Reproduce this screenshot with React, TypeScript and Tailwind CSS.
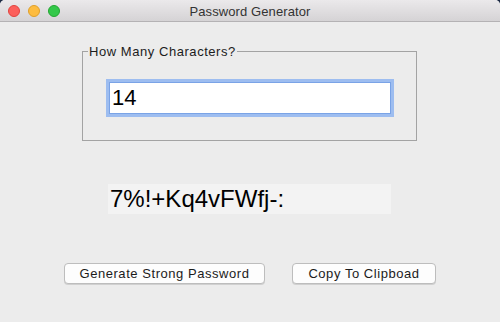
export default function App() {
  return (
    <div className="w-[500px] h-[322px] bg-[#1d2a44] font-['Liberation_Sans',Arial,sans-serif]">
      <div className="w-full h-full rounded-t-[5px] overflow-hidden bg-[#ececec] flex flex-col">
        {/* title bar */}
        <div className="relative h-[22px] shrink-0 flex items-center justify-center bg-gradient-to-b from-[#ebe9eb] to-[#d5d3d5] border-b border-[#b4b2b4]">
          <div className="absolute left-[8px] top-[5px] flex gap-[8px]">
            <span className="w-[12px] h-[12px] rounded-full bg-[#fc605c] border border-[#e0443f]" />
            <span className="w-[12px] h-[12px] rounded-full bg-[#fdbc40] border border-[#de9f2a]" />
            <span className="w-[12px] h-[12px] rounded-full bg-[#34c84a] border border-[#24a632]" />
          </div>
          <span className="text-[13px] leading-none text-[#333333] tracking-[0.1px] pt-[1px]">
            Password Generator
          </span>
        </div>

        {/* body */}
        <div className="flex flex-col items-start">
          <fieldset className="ml-[82px] mt-[23px] w-[335px] border border-[#a3a3a3] pb-[23px]">
            <legend className="ml-[5px] px-[1px] text-[13px] leading-[13px] tracking-[0.55px] text-[#1c1c1c]">
              How Many Characters?
            </legend>
            <div className="pt-[21px] pl-[23px]">
              <input
                readOnly
                value="14"
                className="block w-[288px] h-[38px] bg-white border-[3px] border-[#9dbdf0] outline-none px-[3px] text-[22px] text-black shadow-[inset_0_0_0_1px_#7aa3e6]"
              />
            </div>
          </fieldset>

          <div className="ml-[108px] mt-[43px] w-[283px] h-[30px] bg-[#f3f3f3] px-[2px] text-[24px] leading-[30px] text-black">
            7%!+Kq4vFWfj-:
          </div>

          <div className="mt-[49px] flex">
            <button className="ml-[64px] w-[201px] h-[21px] rounded-[4px] bg-[#fdfdfd] border border-[#bdbdbd] shadow-[0_1px_0_#d0d0d0] text-[13px] leading-none tracking-[0.55px] text-[#1b1b1b]">
              Generate Strong Password
            </button>
            <button className="ml-[27px] w-[144px] h-[21px] rounded-[4px] bg-[#fdfdfd] border border-[#bdbdbd] shadow-[0_1px_0_#d0d0d0] text-[13px] leading-none tracking-[0.55px] text-[#1b1b1b]">
              Copy To Clipboad
            </button>
          </div>
        </div>
      </div>
    </div>
  );
}
